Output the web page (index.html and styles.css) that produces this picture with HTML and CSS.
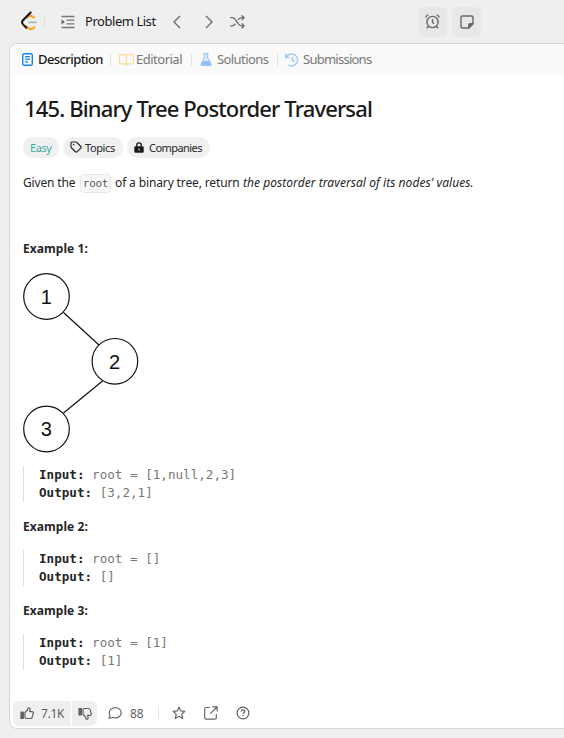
FILE: index.html
```html
<!DOCTYPE html>
<html lang="en">
<head>
<meta charset="utf-8">
<title>145. Binary Tree Postorder Traversal</title>
<link rel="stylesheet" href="styles.css">
</head>
<body>
<header class="topbar">
  <svg class="logo" width="18" height="20" viewBox="0 0 18 20" fill="none" stroke-width="2" stroke-linecap="round" stroke-linejoin="round"><path stroke="#ffa116" d="M6 6.700 7.300 5.600c1.500-1.100 3.200-1 4.500.2l1 1M5.500 15.200l2 2c1.400 1.200 3.300 1.200 4.700.1l1.200-1.200"/><path stroke="#b3b3b3" stroke-width="1.700" d="M8 11.400h7.200"/><path stroke="#111" d="M9.600 1.500 2 9.300c-1.100 1.200-1.100 2.900 0 4.100l3.300 3.300"/></svg>
  <i class="sep logo-sep"></i>
  <svg class="list-icon" width="14" height="14" viewBox="0 0 14 14" fill="none" stroke="#777" stroke-width="1.300"><path d="M.5 1.500h13M5.500 5.200h8M5.500 8.800h8M.5 12.500h13"/><path d="M.5 4.500v5L4 7z" fill="#666" stroke="none"/></svg>
  <span class="list-name">Problem List</span>
  <svg class="prev" width="8" height="14" viewBox="0 0 8 14" fill="none" stroke="#686868" stroke-width="1.300"><path d="M7 1 1 7l6 6"/></svg>
  <svg class="next" width="8" height="14" viewBox="0 0 8 14" fill="none" stroke="#686868" stroke-width="1.300"><path d="m1 1 6 6-6 6"/></svg>
  <svg class="shuffle" width="15" height="14" viewBox="0 0 15 14" fill="none" stroke="#686868" stroke-width="1.300"><path d="M.3 2.700h1.500c1.800 0 2.700.8 3.600 2l2.700 4c1 1.500 1.900 2.200 3.600 2.200H14M.3 10.900h1.500c1.800 0 2.700-.8 3.600-2.100M8 5c1-1.500 1.900-2.300 3.700-2.300H14M11.700.3 14.100 2.700l-2.400 2.400M11.700 8.500l2.400 2.400-2.400 2.400"/></svg>
  <span class="tool alarm"><svg width="15" height="15" viewBox="0 0 15 15" fill="none" stroke="#686868" stroke-width="1.400"><circle cx="7.500" cy="8" r="5.600"/><path d="M7.500 4.900v3.300l1.600 1.500M.7 3.500C1 2.300 2 1.200 3.300.8M14.300 3.500C14 2.300 13 1.200 11.700.8M3.500 12.200l-1.700 2M11.500 12.200l1.700 2"/></svg></span>
  <span class="tool"><svg width="14" height="14" viewBox="0 0 14 14" fill="none" stroke="#686868" stroke-width="1.400" stroke-linejoin="round"><path d="M2.400 1h9.200c.8 0 1.400.6 1.400 1.400v6.400L8.800 13H2.400C1.600 13 1 12.400 1 11.600V2.400C1 1.600 1.600 1 2.400 1z"/><path fill="#686868" d="M8.800 12.800V10c0-.7.500-1.200 1.200-1.200h2.900z"/></svg></span>
</header>
<main class="panel">
  <nav class="tabs">
    <svg class="ic-desc" width="11" height="13" viewBox="0 0 11 13" fill="none" stroke="#1684ef"><rect x=".7" y=".7" width="9.600" height="11.600" rx="1.600" stroke-width="1.400"/><path d="M3 3.600h5M3 6.200h5M3 8.800h3" stroke-width="1.200"/></svg>
    <span class="tab t-desc">Description</span><i class="sep s1"></i>
    <svg class="ic-ed" width="15" height="12" viewBox="0 0 15 12" fill="none" stroke="#f9dc9b" stroke-width="1.200"><path d="M7.500 10.500c-.4-.4-.9-.6-1.600-.6H1.500c-.5 0-.9-.3-.9-.8V1.600c0-.5.400-.9.900-.9h4c1.200 0 2 .7 2 1.800zm0 0c.4-.4.900-.6 1.600-.6h4.400c.5 0 .9-.3.900-.8V1.600c0-.5-.4-.9-.9-.9h-4c-1.200 0-2 .7-2 1.800z"/></svg>
    <span class="tab t-ed">Editorial</span><i class="sep s2"></i>
    <svg class="ic-sol" width="12" height="13" viewBox="0 0 12 13"><path d="M3.300.7h5.400M4.400.7v4.200L1.200 10.700c-.5.900 0 1.600.8 1.600h8c.8 0 1.300-.7.8-1.600L7.600 4.900V.7" fill="#deedfc" stroke="#9dcbf7" stroke-width="1.200"/><path d="M3 8h6l2 3.500c0 .5-.3.900-1 .9H2c-.7 0-1-.4-1-.9z" fill="#8ec1f6"/></svg>
    <span class="tab t-sol">Solutions</span><i class="sep s3"></i>
    <svg class="ic-sub" width="14" height="14" viewBox="0 0 14 14" fill="none" stroke="#9bc9f7" stroke-width="1.400"><path d="M1.200 4.300A6 6 0 1 1 3.400 12M7.300 3.700v3.500l2.300 1.500M.8.900v3.700h3.700"/></svg>
    <span class="tab t-sub">Submissions</span>
  </nav>
  <article class="content">
    <h1>145. Binary Tree Postorder Traversal</h1>
    <div class="tags">
      <span class="tag easy">Easy</span>
      <span class="tag topics"><svg width="12" height="12" viewBox="0 0 12 12" fill="none" stroke="#262626" stroke-width="1.200" stroke-linejoin="round"><path d="M1 2c0-.6.400-1 1-1h3.800c.4 0 .7.100 1 .4l4 4.100c.5.500.5 1.100 0 1.600l-3.600 3.600c-.5.500-1.200.5-1.700 0L1.400 6.800C1.100 6.500 1 6.200 1 5.800z"/><circle cx="3.600" cy="3.600" r=".8" fill="#262626" stroke="none"/></svg><b>Topics</b></span>
      <span class="tag companies"><svg width="10" height="11" viewBox="0 0 10 11"><path d="M2.700 5V3.200C2.700 1.700 3.600.8 5 .8s2.300.9 2.300 2.400V5" fill="none" stroke="#1a1a1a" stroke-width="1.300"/><rect x=".3" y="4.200" width="9.400" height="6.500" rx="1.300" fill="#1a1a1a"/><path d="M5 6.400v2" stroke="#eee" stroke-width="1.100"/></svg><b>Companies</b></span>
    </div>
    <p class="lead"><span class="l1">Given the</span><code>root</code><span class="l2">of a binary tree, return</span><em>the postorder traversal of its nodes' values.</em></p>
    <h2 class="first">Example 1:</h2>
    <svg class="tree" width="120" height="180" viewBox="0 0 120 180" fill="none" stroke="#111" stroke-width="1.200">
      <path d="M40.500 39.500 76 72M79.500 108 40.500 140"/>
      <circle cx="23.500" cy="23.500" r="22.800"/><circle cx="91.900" cy="88.300" r="22.800"/><circle cx="23.500" cy="156" r="22.800"/>
      <g class="node-text"><text x="23.200" y="30.500">1</text><text x="91.500" y="95.500">2</text><text x="23.200" y="163">3</text></g>
    </svg>
    <pre class="p1"><strong>Input:</strong> root = [1,null,2,3]
<strong>Output:</strong> [3,2,1]</pre>
    <h2>Example 2:</h2>
    <pre><strong>Input:</strong> root = []
<strong>Output:</strong> []</pre>
    <h2>Example 3:</h2>
    <pre><strong>Input:</strong> root = [1]
<strong>Output:</strong> [1]</pre>
  </article>
  <footer class="actions">
    <span class="vote up"><svg width="14" height="13" viewBox="0 0 14 13" fill="none" stroke="#606060" stroke-width="1.200" stroke-linejoin="round"><path d="M1 5h2.300v6.500H1z" fill="#606060"/><path d="M5 5.500 7.500 3l.4-1.600c.2-.8 1.300-.9 1.800-.2.700 1 .5 2-.1 3.400h2.500c.9 0 1.400.7 1.200 1.500l-1.100 4c-.2.900-.8 1.400-1.700 1.400H6.800c-.8 0-1.200-.3-1.800-.9z"/></svg><b>7.1K</b></span>
    <span class="vote down"><svg width="14" height="13" viewBox="0 0 14 13" fill="none" stroke="#606060" stroke-width="1.200" stroke-linejoin="round"><path d="M1 1.500h2.300V8H1z" fill="#606060"/><path d="M5 7.500 7.500 10l.4 1.600c.2.800 1.300.9 1.800.2.700-1 .5-2-.1-3.400h2.500c.9 0 1.400-.7 1.200-1.500l-1.100-4c-.2-.9-.8-1.400-1.700-1.400H6.800c-.8 0-1.200.3-1.800.9z"/></svg></span>
    <svg class="ic-comment" width="14" height="12" viewBox="0 0 14 12" fill="none" stroke="#686868" stroke-width="1.200" stroke-linejoin="round"><path d="M7.200.7c3.400 0 6 2.200 6 5.100s-2.600 5.100-6 5.100c-.9 0-1.700-.1-2.400-.4L1 11.200l1-2.800C1.500 7.600 1.200 6.700 1.200 5.800 1.200 2.900 3.800.7 7.200.7z"/></svg>
    <span class="count">88</span><i class="sep"></i>
    <svg class="ic-star" width="14" height="14" viewBox="0 0 14 14" fill="none" stroke="#686868" stroke-width="1.200" stroke-linejoin="round"><path d="m7 1.100 1.700 3.800 4.200.4-3.100 2.800.9 4.400L7 10.300l-3.700 2.200.9-4.400L1.100 5.300l4.200-.4z"/></svg>
    <svg class="ic-share" width="14" height="14" viewBox="0 0 14 14" fill="none" stroke="#686868" stroke-width="1.200"><path d="M5.800 1.500H1.900c-.7 0-1.200.5-1.200 1.200v9.200c0 .7.500 1.200 1.200 1.200h9.200c.7 0 1.200-.5 1.200-1.200V8M8.500.8h4.700v4.700M13 1 6.300 7.700"/></svg>
    <svg class="ic-help" width="14" height="14" viewBox="0 0 14 14" fill="none" stroke="#606060" stroke-width="1.200"><circle cx="7" cy="7" r="5.900"/><path d="M5.200 5.500C5.300 4.400 6 3.900 7 3.900c1.100 0 1.800.6 1.800 1.500C8.800 6.700 7 6.700 7 8.100M7 9.100v1.200"/></svg>
  </footer>
</main>
</body>
</html>
```
FILE: styles.css
```css
* { box-sizing: border-box; }
body { margin: 0; width: 564px; height: 738px; overflow: hidden; background: #efefef; color: #262626; font-family: "Noto Sans", "Open Sans", sans-serif; font-size: 12px; }
svg { display: block; flex: none; }
b { font-weight: inherit; }
.sep { width: 1px; height: 12px; background: #e0e0e0; flex: none; }
.topbar { height: 43px; display: flex; align-items: center; padding-left: 21px; white-space: nowrap; }
.logo { margin-top: -1px; }
.logo-sep { margin-left: 5px; }
.list-icon { margin-left: 16px; }
.list-name { margin: -1px 0 0 10px; width: 73px; font-size: 13px; letter-spacing: -.46px; color: #1a1a1a; }
.prev { margin-left: 15px; }
.next { margin-left: 24px; }
.shuffle { margin-left: 17px; }
.tool { width: 29px; height: 30px; margin-left: 5px; border-radius: 5px; background: #e8e8e8; display: flex; align-items: center; justify-content: center; }
.tool.alarm { margin-left: 173px; }
.panel { margin-left: 9px; height: 686px; width: 563px; border: 1px solid #d6d6d6; border-radius: 8px; background: #fff; overflow: hidden; display: flex; flex-direction: column; }
.tabs { flex: none; height: 32px; background: #fafafa; display: flex; align-items: center; padding: 0 0 1px 12px; white-space: nowrap; }
.tab { font-size: 13px; color: #777; margin-top: -1px; }
.t-desc { margin-left: 5px; width: 65px; color: #1a1a1a; font-weight: 500; letter-spacing: -.58px; }
.s1 { margin-left: 7px; }
.ic-ed { margin-left: 8px; }
.t-ed { margin-left: 2px; width: 46px; letter-spacing: -.5px; }
.s2 { margin-left: 9px; }
.ic-sol { margin-left: 8px; }
.t-sol { margin-left: 5px; width: 53px; letter-spacing: -.58px; }
.s3 { margin-left: 7px; }
.ic-sub { margin-left: 7px; }
.t-sub { margin-left: 4px; letter-spacing: -.75px; }
.content { padding: 17px 0 0 13px; flex: 1; }
h1 { margin: 0 0 0 1px; font-size: 22px; line-height: 30px; font-weight: 500; letter-spacing: -.86px; color: #1a1a1a; white-space: nowrap; }
.tags { display: flex; gap: 4px; margin-top: 14px; }
.tag { height: 21px; padding-bottom: 1px; border-radius: 11px; background: #f0f0f0; display: flex; align-items: center; white-space: nowrap; font-size: 11px; letter-spacing: -.4px; }
.easy { width: 36px; padding-left: 7px; color: #38aaa5; }
.topics { width: 60px; padding-left: 7px; }
.topics b { margin-left: 3px; }
.companies { width: 83px; padding-left: 7px; letter-spacing: -.55px; }
.companies b { margin-left: 5px; }
.lead { margin: 15px 0 0; height: 20px; display: flex; align-items: center; white-space: nowrap; line-height: 20px; }
.l1 { width: 57px; letter-spacing: -.15px; }
.l2 { width: 124px; margin-left: 4px; letter-spacing: -.13px; }
code { width: 31px; height: 19px; border: 1px solid #e8e8e8; border-radius: 4px; background: #f7f7f7; color: #5c5c5c; font: 11px/17px "DejaVu Sans Mono", monospace; letter-spacing: -.3px; text-align: center; }
em { margin-left: 4px; letter-spacing: .05px; }
h2 { margin: 16px 0 0; font-size: 12px; line-height: 18px; font-weight: 700; letter-spacing: .06px; }
h2.first { margin-top: 47px; }
.tree { margin-top: 15px; }
.node-text { fill: #111; stroke: none; font: 20px "Liberation Sans", sans-serif; text-anchor: middle; }
pre { margin: 14px 0 0; height: 36px; padding-left: 15px; border-left: 1px solid #e2e2e2; font: 12.600px/18px "DejaVu Sans Mono", monospace; color: #777; }
pre.p1 { margin-top: 13px; }
pre strong { color: #262626; }
.actions { flex: none; height: 28px; display: flex; align-items: center; padding-left: 3px; color: #606060; margin-bottom: 1px; }
.vote { height: 25px; background: #efefef; display: flex; align-items: center; }
.up { width: 58px; padding-left: 7px; border-radius: 6px 0 0 6px; }
.up b { margin-left: 7px; letter-spacing: -.3px; }
.down { width: 25px; margin-left: 1px; padding-left: 6px; border-radius: 0 6px 6px 0; }
.ic-comment { margin-left: 11px; }
.count { width: 15px; margin-left: 8px; }
.actions .sep { margin-left: 13px; }
.ic-star { margin-left: 13px; }
.ic-share { margin-left: 18px; }
.ic-help { margin-left: 18px; }
```
